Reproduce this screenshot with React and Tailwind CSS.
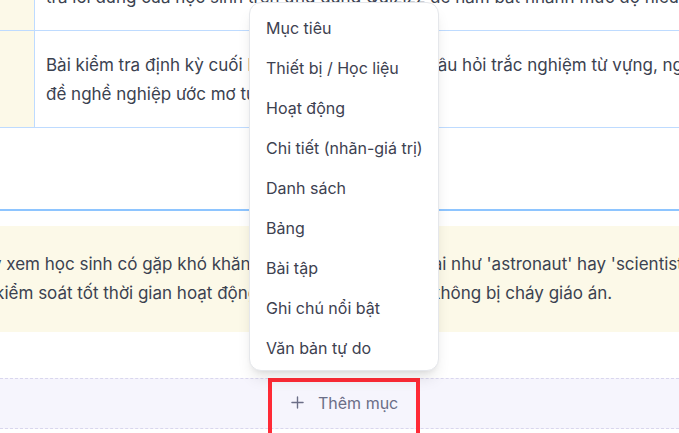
import React from 'react';
import { Plus } from 'lucide-react';

const menuItems = [
  'Mục tiêu',
  'Thiết bị / Học liệu',
  'Hoạt động',
  'Chi tiết (nhãn-giá trị)',
  'Danh sách',
  'Bảng',
  'Bài tập',
  'Ghi chú nổi bật',
  'Văn bản tự do',
];

const App = () => {
  return (
    <div className="relative h-[433px] w-[679px] overflow-hidden bg-white font-[Inter,sans-serif] text-[17px] leading-[28.8px] text-[#3b4250]">
      <div className="-ml-[60px] w-[1100px]">
        {/* Table rows (scrolled) */}
        <div className="-mt-[17px]">
          <div className="flex border-b border-blue-200">
            <div className="w-[95px] shrink-0 border-r border-blue-200 bg-[#fcf9e8]"></div>
            <div className="flex-1 whitespace-nowrap pb-[18px] pl-[11px]">
              trả lời đúng của học sinh trên ứng dụng Quizizz để nắm bắt nhanh mức độ hiểu bài của cả lớp.
            </div>
          </div>
          <div className="flex border-b border-blue-200">
            <div className="w-[95px] shrink-0 border-r border-blue-200 bg-[#fcf9e8]"></div>
            <div className="flex-1 whitespace-nowrap pb-[19px] pl-[11px] pt-5">
              Bài kiểm tra định kỳ cuối buổi học, bao gồm 20 câu hỏi trắc nghiệm từ vựng, ngữ pháp xoay quanh chủ
              <br />
              đề nghề nghiệp ước mơ tương lai.
            </div>
          </div>
        </div>

        {/* Note section */}
        <div className="mt-[81px] border-t-2 border-blue-300 pt-[15px]">
          <div className="whitespace-nowrap bg-[#fcf9e8] py-6 pl-[30px]">
            Hãy xem học sinh có gặp khó khăn khi phát âm các chữ dài như 'astronaut' hay 'scientist' không, đồng thời chú ý
            <br />
            để kiểm soát tốt thời gian hoạt động, và đảm bảo tiết học không bị cháy giáo án.
          </div>
        </div>
      </div>

      {/* Add section bar */}
      <div className="mt-[46px] flex h-[51px] justify-center border-y border-dashed border-[#d9d6ee] bg-[#f6f5fd] pl-[9px]">
        <div className="relative -mt-px">
          <div className="absolute bottom-full left-[-19px] z-10 mb-[7px] w-[190px] rounded-xl border border-gray-200 bg-white pb-[2px] pt-[5px] shadow-lg">
            {menuItems.map((item) => (
              <div key={item} className="flex h-10 items-center whitespace-nowrap px-4 text-[16px] text-[#3d4150]">
                {item}
              </div>
            ))}
          </div>
          <button className="flex h-[60px] w-[152px] items-start gap-[11px] border-4 border-[#ff2a36] pl-4 pt-[9px] text-[16px] leading-[24px] text-[#6b6e87]">
            <Plus size={19} strokeWidth={1.75} className="mt-[2px]" />
            <span>Thêm mục</span>
          </button>
        </div>
      </div>
    </div>
  );
};

export default App;
